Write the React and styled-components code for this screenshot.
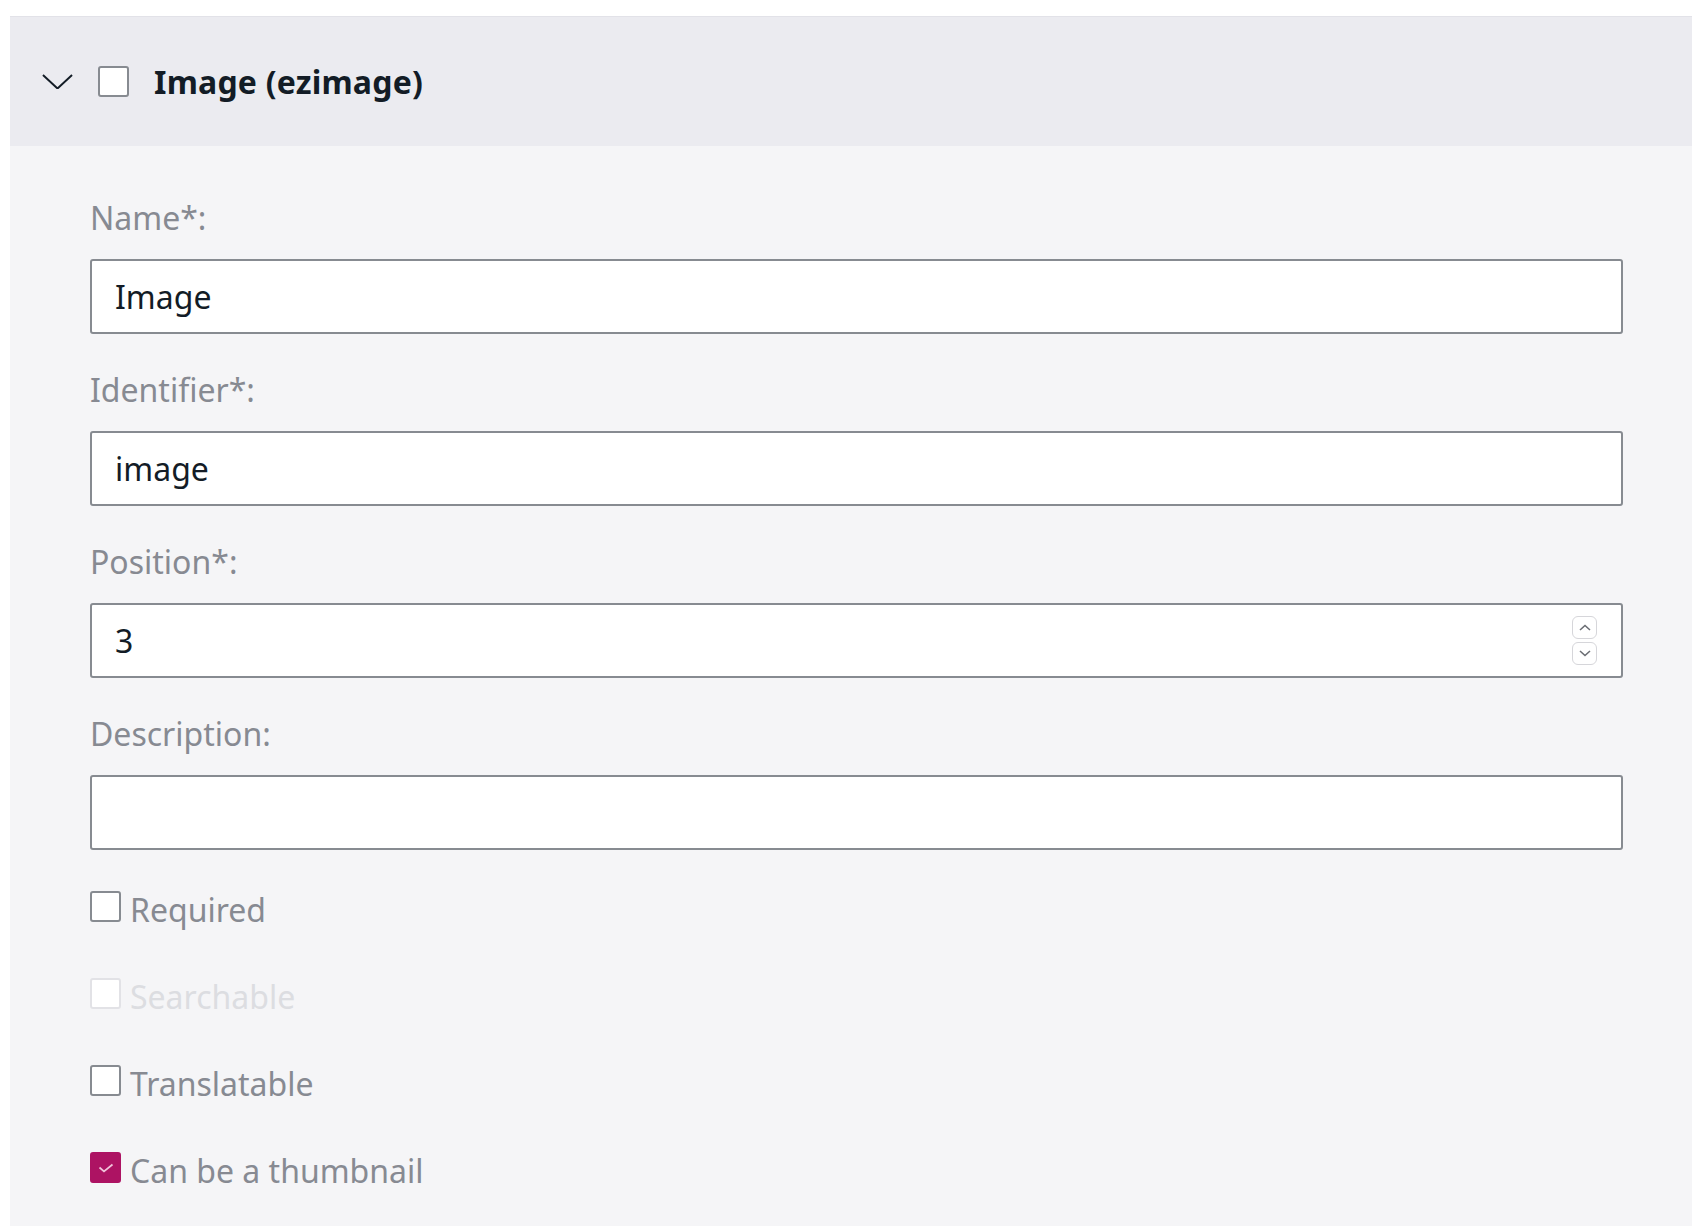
import React from "react";
import styled, { createGlobalStyle } from "styled-components";

const GlobalStyle = createGlobalStyle`
  html, body {
    margin: 0;
    padding: 0;
    background: #ffffff;
    font-family: "Noto Sans", "Open Sans", sans-serif;
  }
`;

const Page = styled.div`
  padding: 16px 0 0 10px;
  min-height: 1210px;
`;

const Panel = styled.section`
  background: #f5f5f7;
  border-top: 1px solid #e2e2e8;
`;

const Header = styled.div`
  display: flex;
  align-items: center;
  height: 129px;
  padding-left: 32px;
  background: #ebebf0;
`;

const Toggle = styled.button`
  display: flex;
  align-items: center;
  justify-content: center;
  width: 31px;
  height: 31px;
  padding: 0;
  border: none;
  background: none;
  margin-right: 25px;
  cursor: pointer;
`;

const Title = styled.h2`
  margin: 0 0 0 25px;
  font-size: 32px;
  font-weight: 700;
  line-height: 40px;
  letter-spacing: 0.2px;
  color: #131c26;
`;

const Body = styled.div`
  padding: 52px 69px 42px 80px;
`;

const Field = styled.div`
  margin-bottom: 36px;
`;

const Label = styled.label`
  display: block;
  font-size: 32px;
  line-height: 40px;
  color: #878a92;
  margin-bottom: 21px;
`;

const InputBox = styled.div`
  display: flex;
  align-items: center;
  height: 75px;
  box-sizing: border-box;
  border: 2px solid #878b91;
  border-radius: 3px;
  background: #ffffff;
  padding: 0 24px 0 23px;
`;

const TextInput = styled.input`
  flex: 1;
  min-width: 0;
  border: none;
  outline: none;
  background: transparent;
  padding: 0;
  font-family: "Noto Sans", sans-serif;
  font-size: 32px;
  color: #131c26;
`;

const Spinner = styled.div`
  display: flex;
  flex-direction: column;
  gap: 3px;
`;

const SpinButton = styled.span`
  display: flex;
  align-items: center;
  justify-content: center;
  width: 23px;
  height: 21px;
  border: 1px solid #d6d6da;
  border-radius: 6px;
`;

const Options = styled.div`
  display: flex;
  flex-direction: column;
  gap: 47px;
  padding-top: 4px;
`;

const CheckRow = styled.label`
  display: flex;
  align-items: flex-start;
  gap: 9px;
  font-size: 32px;
  line-height: 40px;
  color: ${(p) => (p.$disabled ? "#dcdde1" : "#878a92")};
`;

const Box = styled.span`
  display: flex;
  align-items: center;
  justify-content: center;
  flex-shrink: 0;
  width: 31px;
  height: 31px;
  box-sizing: border-box;
  margin-top: ${(p) => p.$offset ?? 1}px;
  border-radius: 3px;
  border: 2px solid
    ${(p) => (p.$checked ? "#ad1363" : p.$disabled ? "#e2e2e6" : "#878b91")};
  background: ${(p) => (p.$checked ? "#ad1363" : "#ffffff")};
`;

const Chevron = ({ dir = "down", size = 31, color = "#131c26", width = 2 }) => (
  <svg width={size} height={size / 2} viewBox="0 0 32 16" fill="none">
    <path
      d={dir === "down" ? "M1 1 L16 15 L31 1" : "M1 15 L16 1 L31 15"}
      stroke={color}
      strokeWidth={width}
    />
  </svg>
);

const Check = () => (
  <svg width="18" height="12" viewBox="0 0 18 12" fill="none">
    <path d="M2.5 5.5 L7 9.5 L15.5 2.5" stroke="#f0c4da" strokeWidth="1.7" />
  </svg>
);

const Checkbox = ({ checked, disabled, offset }) => (
  <Box $checked={checked} $disabled={disabled} $offset={offset}>
    {checked && <Check />}
  </Box>
);

const fields = [
  { label: "Name*:", value: "Image" },
  { label: "Identifier*:", value: "image" },
  { label: "Position*:", value: "3", spin: true },
  { label: "Description:", value: "" },
];

const options = [
  { label: "Required" },
  { label: "Searchable", disabled: true },
  { label: "Translatable" },
  { label: "Can be a thumbnail", checked: true },
];

export default function App() {
  return (
    <>
      <GlobalStyle />
      <Page>
        <Panel>
          <Header>
            <Toggle aria-label="collapse">
              <Chevron />
            </Toggle>
            <Checkbox offset={0} />
            <Title>Image (ezimage)</Title>
          </Header>
          <Body>
            {fields.map((f) => (
              <Field key={f.label}>
                <Label>{f.label}</Label>
                <InputBox>
                  <TextInput defaultValue={f.value} />
                  {f.spin && (
                    <Spinner>
                      <SpinButton>
                        <svg width="12" height="7" viewBox="0 0 12 7" fill="none">
                          <path d="M1 6 L6 1.5 L11 6" stroke="#6b6e74" strokeWidth="1.6" />
                        </svg>
                      </SpinButton>
                      <SpinButton>
                        <svg width="12" height="7" viewBox="0 0 12 7" fill="none">
                          <path d="M1 1 L6 5.5 L11 1" stroke="#6b6e74" strokeWidth="1.6" />
                        </svg>
                      </SpinButton>
                    </Spinner>
                  )}
                </InputBox>
              </Field>
            ))}
            <Options>
              {options.map((o) => (
                <CheckRow key={o.label} $disabled={o.disabled}>
                  <Checkbox checked={o.checked} disabled={o.disabled} />
                  {o.label}
                </CheckRow>
              ))}
            </Options>
          </Body>
        </Panel>
      </Page>
    </>
  );
}
